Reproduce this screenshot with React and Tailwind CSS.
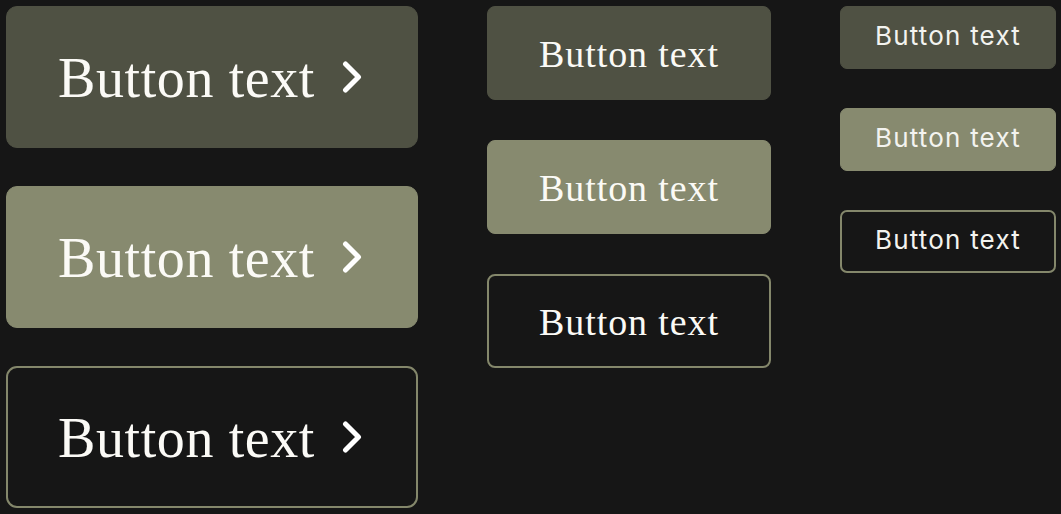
import { Fragment } from 'react';

const variants = {
    dark: 'bg-[#4f5143] border border-[#4f5143]',
    sage: 'bg-[#878a6f] border border-[#878a6f]',
    outline: 'bg-transparent border-2 border-[#84876b]',
};

function Chevron() {
    return (
        <svg width="20" height="34" viewBox="0 0 20 34" fill="none" className="shrink-0">
            <path d="M3.5 4 L16.5 17 L3.5 30" stroke="#ffffff" strokeWidth="5" strokeLinecap="round" strokeLinejoin="round" />
        </svg>
    );
}

function LargeButton({ variant }) {
    return (
        <button className={`${variants[variant]} w-[412px] h-[142px] rounded-[11px] flex items-center justify-center gap-[27px] pr-[4px]`}>
            <span className="font-['Liberation_Serif',serif] text-[56px] leading-none tracking-[0.6px] text-[#fbfaf6] pt-[2px]">
                Button text
            </span>
            <Chevron />
        </button>
    );
}

function MediumButton({ variant }) {
    return (
        <button className={`${variants[variant]} w-[284px] h-[94px] rounded-[8px] flex items-center justify-center`}>
            <span className="font-['Liberation_Serif',serif] text-[38px] leading-none tracking-[0.9px] text-[#fbfaf6] pt-[2px]">
                Button text
            </span>
        </button>
    );
}

function SmallButton({ variant }) {
    return (
        <button className={`${variants[variant]} w-[216px] h-[63px] rounded-[7px] flex items-center justify-center`}>
            <span className="font-['Inter',sans-serif] font-normal text-[26px] leading-none tracking-[1.2px] text-[#f3f3ef] mb-[3px]">
                Button text
            </span>
        </button>
    );
}

export default function App() {
    const order = ['dark', 'sage', 'outline'];

    return (
        <div className="w-[1061px] h-[514px] bg-[#161616] p-[6px] flex gap-[69px] overflow-hidden">
            <div className="flex flex-col gap-[38px]">
                {order.map(v => <LargeButton key={v} variant={v} />)}
            </div>
            <div className="flex flex-col gap-[40px]">
                {order.map(v => <MediumButton key={v} variant={v} />)}
            </div>
            <div className="flex flex-col gap-[39px]">
                {order.map(v => <SmallButton key={v} variant={v} />)}
            </div>
        </div>
    );
}
